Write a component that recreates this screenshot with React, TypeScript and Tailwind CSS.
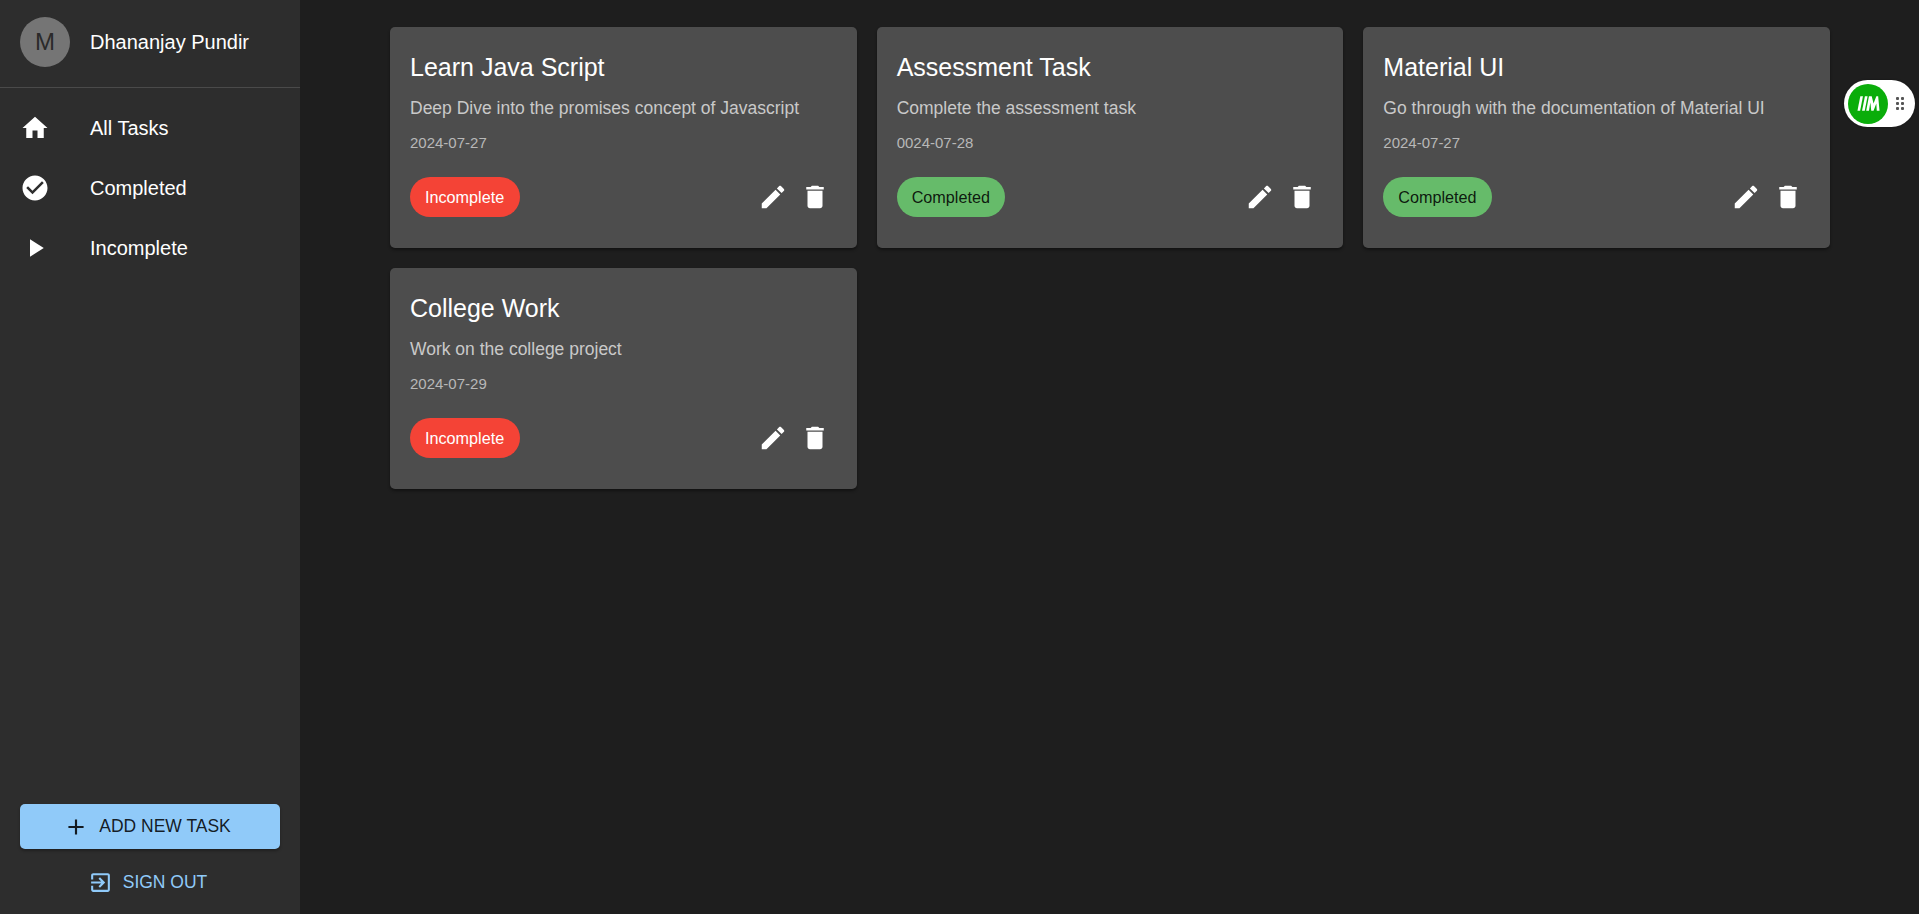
const Icon = ({ d, className = "" }: { d: string; className?: string }) => (
  <svg viewBox="0 0 24 24" fill="currentColor" className={className}>
    <path d={d} />
  </svg>
);

const P = {
  home: "M10 20v-6h4v6h5v-8h3L12 3 2 12h3v8z",
  check: "M12 2C6.48 2 2 6.48 2 12s4.48 10 10 10 10-4.48 10-10S17.52 2 12 2zm-2 15l-5-5 1.41-1.41L10 14.17l7.59-7.59L19 8l-9 9z",
  play: "M8 5v14l11-7z",
  edit: "M3 17.25V21h3.75L17.81 9.94l-3.75-3.75L3 17.25zM20.71 7.04c.39-.39.39-1.02 0-1.41l-2.34-2.34c-.39-.39-1.02-.39-1.41 0l-1.83 1.83 3.75 3.75 1.83-1.83z",
  del: "M6 19c0 1.1.9 2 2 2h8c1.1 0 2-.9 2-2V7H6v12zM19 4h-3.5l-1-1h-5l-1 1H5v2h14V4z",
  add: "M19 13h-6v6h-2v-6H5v-2h6V5h2v6h6v2z",
  exit: "M10.09 15.59L11.5 17l5-5-5-5-1.41 1.41L12.67 11H3v2h9.67l-2.58 2.59zM19 3H5c-1.11 0-2 .9-2 2v4h2V5h14v14H5v-4H3v4c0 1.1.89 2 2 2h14c1.1 0 2-.9 2-2V5c0-1.1-.9-2-2-2z",
};

const tasks = [
  { title: "Learn Java Script", desc: "Deep Dive into the promises concept of Javascript", date: "2024-07-27", done: false },
  { title: "Assessment Task", desc: "Complete the assessment task", date: "0024-07-28", done: true },
  { title: "Material UI", desc: "Go through with the documentation of Material UI", date: "2024-07-27", done: true },
  { title: "College Work", desc: "Work on the college project", date: "2024-07-29", done: false },
];

const nav = [
  { label: "All Tasks", d: P.home },
  { label: "Completed", d: P.check },
  { label: "Incomplete", d: P.play },
];

function Card({ t }: { t: (typeof tasks)[number] }) {
  return (
    <div className="h-[221px] rounded-[5px] bg-[#4d4d4d] p-5 shadow-[0_2px_3px_rgba(0,0,0,0.4)]">
      <h2 className="text-[25px] leading-[40px] text-white">{t.title}</h2>
      <p className="mt-2 text-[17.5px] leading-[26px] text-[#c9c9c9]">{t.desc}</p>
      <p className="mt-[11px] text-[15px] leading-[22px] text-[#b8b8b8]">{t.date}</p>
      <div className="mt-[23px] flex items-center justify-between">
        <span
          className={
            t.done
              ? "flex h-10 items-center rounded-full bg-[#66bb6a] pl-[15px] pr-[15px] text-[16.2px] text-[rgba(0,0,0,0.87)]"
              : "flex h-10 items-center rounded-full bg-[#f44336] pl-[15px] pr-4 text-[16.2px] text-white"
          }
        >
          {t.done ? "Completed" : "Incomplete"}
        </span>
        <div className="mr-[6.5px] flex items-center gap-3 text-white">
          <Icon d={P.edit} className="h-[30px] w-[30px]" />
          <Icon d={P.del} className="h-[30px] w-[30px]" />
        </div>
      </div>
    </div>
  );
}

export default function App() {
  return (
    <div className="flex h-screen bg-[#1e1e1e] font-['Liberation_Sans',Arial,sans-serif]">
      <aside className="flex w-[300px] shrink-0 flex-col bg-[#2d2d2d]">
        <div className="flex h-[84px] items-center gap-5 px-5">
          <div className="flex h-[50px] w-[50px] items-center justify-center rounded-full bg-[#757575] text-[24px] text-[#2a2a2a]">
            M
          </div>
          <span className="text-[20px] text-white">Dhananjay Pundir</span>
        </div>
        <div className="mt-[3px] h-px bg-[#4a4a4a]" />
        <nav className="flex flex-col pt-[10px]">
          {nav.map((n) => (
            <div key={n.label} className="flex h-[60px] items-center gap-10 px-5 text-white">
              <Icon d={n.d} className="h-[30px] w-[30px]" />
              <span className="text-[20px]">{n.label}</span>
            </div>
          ))}
        </nav>
        <div className="mt-auto flex flex-col px-5 pb-[14px]">
          <button className="flex h-[45px] items-center justify-center gap-[10px] rounded-[5px] bg-[#90caf9] pr-[6px] text-[17.5px] text-[rgba(0,0,0,0.87)] shadow-[0_2px_3px_rgba(0,0,0,0.3)]">
            <Icon d={P.add} className="h-[26px] w-[26px]" />
            ADD NEW TASK
          </button>
          <div className="mt-[15px] flex h-[36px] items-center justify-center gap-[10px] pr-[5px] text-[17.5px] text-[#90caf9]">
            <Icon d={P.exit} className="h-[25px] w-[25px]" />
            SIGN OUT
          </div>
        </div>
      </aside>
      <main className="relative flex-1 pl-[90px] pt-[27px]">
        <div className="grid w-[1440px] grid-cols-3 gap-5">
          {tasks.map((t) => (
            <Card key={t.title} t={t} />
          ))}
        </div>
        <div className="absolute left-[1544px] top-[80px] flex h-[47px] w-[71px] items-center rounded-full bg-white pl-1 shadow-[0_0_2px_rgba(0,0,0,0.4)]">
          <div className="flex h-10 w-10 items-center justify-center rounded-full bg-[#0aad0a]">
            <svg viewBox="0 0 25 18" className="h-[17px] w-[23px]" fill="white">
              <polygon points="3.4,17 0.5,17 3.6,1 6.5,1" />
              <polygon points="8.4,17 5.5,17 8.6,1 11.5,1" />
              <polygon points="10,17 13,1 16,1 18,9 21,1 23,1 24.5,17 21.5,17 21,9 18,17 15.5,17 14.5,8 13,17" />
            </svg>
          </div>
          <div className="ml-[8px] grid grid-cols-2 gap-[2px]">
            {[0, 1, 2, 3, 4, 5].map((i) => (
              <span key={i} className="h-[3px] w-[3px] rounded-[1px] bg-[#555]" />
            ))}
          </div>
        </div>
      </main>
    </div>
  );
}
